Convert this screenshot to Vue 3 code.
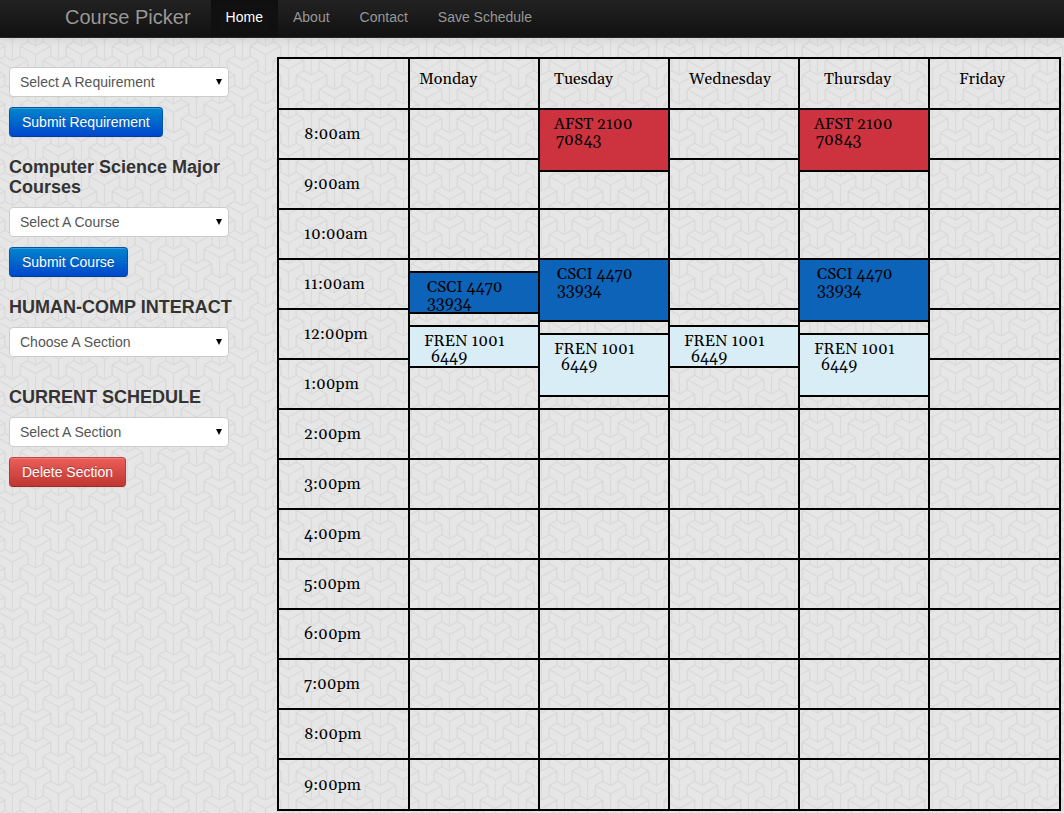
<script setup>
import { ref } from 'vue'

const links = ['Home', 'About', 'Contact', 'Save Schedule']
const days = ['Monday', 'Tuesday', 'Wednesday', 'Thursday', 'Friday']
const hours = Array.from({ length: 14 }, (_, i) => i + 8)

const requirement = ref('')
const course = ref('')
const section = ref('')
const scheduled = ref('')

// start: minutes after midnight, length: minutes
const meetings = [
  { kind: 'csci', title: 'CSCI 4470', number: '33934', day: 0, start: 675, length: 50 },
  { kind: 'fren', title: 'FREN 1001', number: '6449', day: 0, start: 740, length: 50 },
  { kind: 'afst', title: 'AFST 2100', number: '70843', day: 1, start: 480, length: 75 },
  { kind: 'csci', title: 'CSCI 4470', number: '33934', day: 1, start: 660, length: 75 },
  { kind: 'fren', title: 'FREN 1001', number: '6449', day: 1, start: 750, length: 75 },
  { kind: 'fren', title: 'FREN 1001', number: '6449', day: 2, start: 740, length: 50 },
  { kind: 'afst', title: 'AFST 2100', number: '70843', day: 3, start: 480, length: 75 },
  { kind: 'csci', title: 'CSCI 4470', number: '33934', day: 3, start: 660, length: 75 },
  { kind: 'fren', title: 'FREN 1001', number: '6449', day: 3, start: 750, length: 75 }
]

const HOUR_HEIGHT = 50
const LINE = 2

const hourLabel = (h) => (h < 12 ? `${h}:00am` : `${h === 12 ? 12 : h - 12}:00pm`)
const startingAt = (day, hour) =>
  meetings.filter((m) => m.day === day && Math.floor(m.start / 60) === hour)
const toPixels = (minutes) => (minutes * HOUR_HEIGHT) / 60

function meetingStyle(m) {
  const offset = m.start % 60
  const top = Math.round(toPixels(offset))
  const bottom = Math.floor(toPixels(offset + m.length))
  return {
    top: `${top - LINE}px`,
    height: `${bottom - top + LINE}px`
  }
}
const dayStyle = (i) => ({ paddingLeft: `${9 + i * 5}px` })
</script>

<template>
  <div class="page">
    <header class="navbar">
      <a class="brand" href="#">Course Picker</a>
      <nav class="links">
        <a v-for="(link, i) in links" :key="link" href="#" :class="{ active: i === 0 }">{{ link }}</a>
      </nav>
    </header>

    <div class="content">
      <aside class="sidebar">
        <form class="group" @submit.prevent>
          <select v-model="requirement" aria-label="Requirement">
            <option value="">Select A Requirement</option>
          </select>
          <button class="btn primary" type="submit">Submit Requirement</button>
        </form>

        <form class="group" @submit.prevent>
          <label for="course">Computer Science Major Courses</label>
          <select id="course" v-model="course">
            <option value="">Select A Course</option>
          </select>
          <button class="btn primary" type="submit">Submit Course</button>
        </form>

        <form class="group" @submit.prevent>
          <label for="section">HUMAN-COMP INTERACT</label>
          <select id="section" v-model="section">
            <option value="">Choose A Section</option>
          </select>
        </form>

        <form class="group current" @submit.prevent>
          <label for="scheduled">CURRENT SCHEDULE</label>
          <select id="scheduled" v-model="scheduled">
            <option value="">Select A Section</option>
          </select>
          <button class="btn danger" type="submit">Delete Section</button>
        </form>
      </aside>

      <main class="main">
        <table class="schedule">
          <colgroup>
            <col class="edge" />
            <col span="4" />
            <col class="edge" />
          </colgroup>
          <thead>
            <tr>
              <td></td>
              <th v-for="(day, i) in days" :key="day" scope="col" :style="dayStyle(i)">{{ day }}</th>
            </tr>
          </thead>
          <tbody>
            <tr v-for="hour in hours" :key="hour">
              <th class="hour" scope="row">{{ hourLabel(hour) }}</th>
              <td v-for="(day, d) in days" :key="day">
                <div
                  v-for="m in startingAt(d, hour)"
                  :key="m.title"
                  class="meeting"
                  :class="m.kind"
                  :style="meetingStyle(m)"
                >
                  <div>{{ m.title }}</div>
                  <div class="number">{{ m.number }}</div>
                </div>
              </td>
            </tr>
          </tbody>
        </table>
      </main>
    </div>
  </div>
</template>

<style>
body {
  background-color: #e6e6e6;
  background-image: url("data:image/svg+xml,%3Csvg xmlns='http://www.w3.org/2000/svg' width='46' height='29' viewBox='0 0 46 29'%3E%3Cdefs%3E%3Cpath id='y' fill='none' stroke='%23dadada' stroke-width='1.3' d='M-15.3-8.5 0 0 15.3-8.5M0 0V20.5M-15.3-8.5-7.7-12.7 0-8.5 7.7-12.7 15.3-8.5M-15.3-8.5V1.8M15.3-8.5V1.8'/%3E%3C/defs%3E%3Cuse href='%23y' x='35.5' y='25.5'/%3E%3Cuse href='%23y' x='35.5' y='-3.5'/%3E%3Cuse href='%23y' x='-10.5' y='25.5'/%3E%3Cuse href='%23y' x='-10.5' y='-3.5'/%3E%3Cuse href='%23y' x='12.5' y='11'/%3E%3Cuse href='%23y' x='12.5' y='40'/%3E%3Cuse href='%23y' x='12.5' y='-18'/%3E%3Cuse href='%23y' x='58.5' y='11'/%3E%3C/svg%3E");
}
</style>

<style scoped>
.page {
  font: 14px/20px "Liberation Sans", Arial, sans-serif;
  color: #333;
}
.navbar {
  display: flex;
  padding-left: 45px;
  background: linear-gradient(#222, #111);
  border-bottom: 1px solid #252525;
  box-shadow: 0 1px 10px rgba(0, 0, 0, 0.1);
}
.navbar a {
  color: #999;
  text-decoration: none;
  text-shadow: 0 -1px 0 rgba(0, 0, 0, 0.25);
}
.brand {
  padding: 7px 20px 10px;
  font-size: 20px;
}
.links {
  display: flex;
}
.links a {
  padding: 7px 15px 10px;
}
.links a.active {
  color: #fff;
  background: #111;
  box-shadow: inset 0 3px 8px rgba(0, 0, 0, 0.125);
}
.content {
  display: flex;
  padding: 19px 3px 2px 9px;
}
.sidebar {
  flex: 0 0 268px;
  display: flex;
  flex-direction: column;
  gap: 20px;
  padding-top: 10px;
  box-sizing: border-box;
}
.group {
  display: flex;
  flex-direction: column;
  align-items: flex-start;
  gap: 10px;
  padding-right: 28px;
}
.group.current {
  margin-top: 10px;
}
label {
  font-size: 18px;
  font-weight: bold;
}
select {
  width: 220px;
  height: 30px;
  padding: 0 24px 0 10px;
  appearance: none;
  border: 1px solid #ccc;
  border-radius: 4px;
  background: #fff url("data:image/svg+xml,%3Csvg xmlns='http://www.w3.org/2000/svg' width='6' height='6'%3E%3Cpath d='M0 0H6L3 6Z'/%3E%3C/svg%3E") no-repeat right 6px center;
  color: #555;
  font: inherit;
}
.btn {
  padding: 4px 12px;
  border: 1px solid;
  border-radius: 4px;
  color: #fff;
  font: inherit;
  text-shadow: 0 -1px 0 rgba(0, 0, 0, 0.25);
  box-shadow: inset 0 1px 0 rgba(255, 255, 255, 0.2), 0 1px 2px rgba(0, 0, 0, 0.05);
}
.primary {
  background: linear-gradient(#08c, #04c) border-box;
  border-color: #0055a8 #0055a8 #003c99;
}
.danger {
  background: linear-gradient(#ee5f5b, #bd362f) border-box;
  border-color: #c04440 #b83a36 #9c2c27;
}
.main {
  flex: 1;
  min-width: 0;
}
.schedule {
  width: 100%;
  table-layout: fixed;
  border-collapse: collapse;
  font: 16px/16px Georgia, Gelasio, "Liberation Serif", serif;
  color: #000;
}
.schedule .edge {
  width: 131px;
}
.schedule th,
.schedule td {
  position: relative;
  box-sizing: border-box;
  height: 50px;
  padding: 0;
  border: 2px solid #000;
  font-weight: normal;
  text-align: left;
}
.schedule thead th,
.schedule thead td,
.schedule tbody tr:last-child > * {
  height: 51px;
}
.schedule thead th {
  padding-bottom: 10px;
}
.schedule .hour {
  padding-left: 25px;
}
.meeting {
  position: absolute;
  left: 0;
  right: 0;
  z-index: 1;
  box-sizing: border-box;
  padding: 6px 14px 0;
  border: solid #000;
  border-width: 2px 0;
}
.afst {
  background: #cd333f;
}
.afst .number {
  padding-left: 2px;
}
.csci {
  padding-left: 17px;
  background: #0d63b7;
}
.fren {
  background: #d9edf7;
}
.fren .number {
  padding-left: 7px;
}
</style>
